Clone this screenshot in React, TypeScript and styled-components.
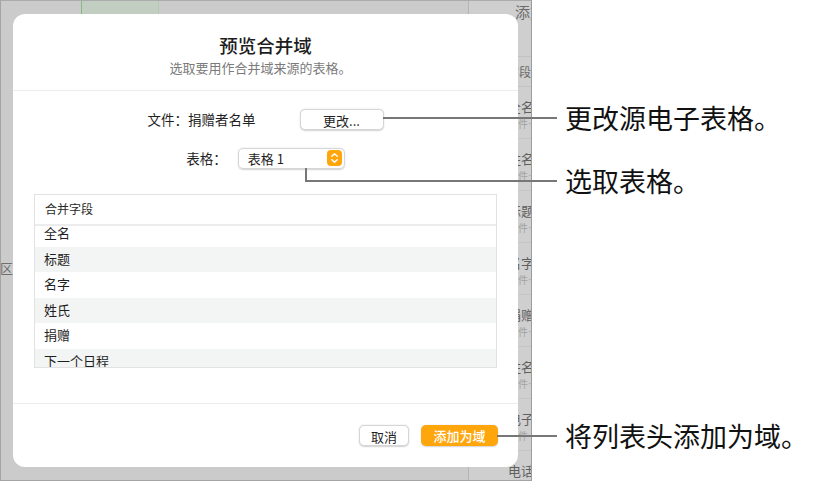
import React from 'react'
import styled, {createGlobalStyle} from "styled-components";

const GlobalStyle = createGlobalStyle`
    body {
        margin: 0;
        background: #fff;
        font-family: "Noto Sans CJK SC", "Noto Sans", sans-serif;
    }
`

const Page = styled.div`
    position: relative;
    width: 819px;
    height: 481px;
    display: flex;
    overflow: hidden;
    background: #fff;
`

const Screen = styled.div`
    position: relative;
    box-sizing: border-box;
    width: 532px;
    height: 481px;
    display: flex;
    background: #cbcbcb;
    border-left: 1px solid #a4a4a4;
    border-top: 1px solid #ababab;
    border-bottom: 1px solid #a4a4a4;
    border-right: 1px solid #9c9c9c;
`

const MainArea = styled.div`
    width: 467px;
    display: flex;
    flex-direction: column;
`

const TopBar = styled.div`
    height: 13px;
    display: flex;
`

const GreenCell = styled.div`
    margin-left: 80px;
    width: 76px;
    background: #c3cec3;
    border-left: 1px solid #86b886;
    border-right: 1px solid #b5c7b5;
`

const EdgeGlyph = styled.div`
    margin-top: 246px;
    margin-left: -1px;
    font-size: 13px;
    line-height: 16px;
    color: #707070;
`

const Sidebar = styled.div`
    width: 62px;
    border-left: 1px solid #b4b4b4;
    background: #cfcfcf;
    overflow: hidden;
    white-space: nowrap;
`

const SideHeader = styled.div`
    height: 56px;
    padding: 1px 0 0 46px;
    box-sizing: border-box;
    font-size: 15px;
    line-height: 19px;
    color: #6b6b6b;
    border-bottom: 1px solid #c2c2c2;
`

const SideSection = styled.div`
    height: 29px;
    padding-left: 38px;
    font-size: 12px;
    line-height: 29px;
    color: #6b6b6b;
    border-bottom: 1px solid #c2c2c2;
`

const SideRow = styled.div`
    height: 52px;
    padding: 12px 0 0 39px;
    box-sizing: border-box;
    border-bottom: 1px solid #c6c6c6;
`

const SideTitle = styled.div`
    font-size: 13px;
    line-height: 16px;
    color: #5f5f5f;
`

const SideSub = styled.div`
    margin-top: 2px;
    font-size: 10px;
    line-height: 14px;
    color: #a2a2a2;
`

const Dialog = styled.div`
    position: absolute;
    left: 12px;
    top: 13px;
    width: 505px;
    height: 453px;
    background: #fff;
    border-radius: 12px;
    display: flex;
    flex-direction: column;
`

const Header = styled.div`
    padding: 19px 0 13px;
    text-align: center;
    border-bottom: 1px solid #ececec;
`

const Title = styled.div`
    font-size: 18.5px;
    line-height: 24px;
    font-weight: 500;
    color: #1d1d1d;
`

const Subtitle = styled.div`
    margin-top: 2px;
    padding-right: 10px;
    font-size: 13px;
    line-height: 18px;
    color: #7b7b7b;
`

const Form = styled.div`
    flex: 1;
    display: flex;
    flex-direction: column;
    padding-top: 17px;
`

const FieldRow = styled.div<{ $gap: number, $top?: number }>`
    display: flex;
    justify-content: center;
    align-items: center;
    gap: ${p => p.$gap}px;
    height: 22px;
    margin-top: ${p => p.$top || 0}px;
`

const Label = styled.span`
    font-size: 13.5px;
    color: #1f1f1f;
`

const Button = styled.button<{ $primary?: boolean, $width: number }>`
    width: ${p => p.$width}px;
    height: 21px;
    padding: 0;
    border-radius: 5px;
    font-family: inherit;
    font-size: 13px;
    line-height: 21px;
    border: ${p => p.$primary ? 'none' : '0.5px solid #d6d6d6'};
    background: ${p => p.$primary ? '#ffa60d' : '#fff'};
    color: ${p => p.$primary ? '#fff' : '#1f1f1f'};
    font-weight: ${p => p.$primary ? 500 : 400};
    box-shadow: 0 0.5px 1.5px rgba(0, 0, 0, 0.18);
`

const Select = styled.div`
    box-sizing: border-box;
    width: 107px;
    height: 21px;
    padding: 0 2px 0 9px;
    display: flex;
    align-items: center;
    justify-content: space-between;
    border: 0.5px solid #d6d6d6;
    border-radius: 5px;
    box-shadow: 0 0.5px 1.5px rgba(0, 0, 0, 0.18);
    font-size: 13px;
    color: #1f1f1f;
`

const Table = styled.div`
    margin: 25px 21px 0;
    height: 174px;
    box-sizing: border-box;
    border: 1px solid #e2e2e2;
    display: flex;
    flex-direction: column;
`

const TableHead = styled.div`
    height: 29px;
    padding-left: 10px;
    font-size: 12px;
    line-height: 28px;
    color: #2a2a2a;
    border-bottom: 2px solid #ececec;
`

const TableBody = styled.div`
    flex: 1;
    overflow: hidden;
`

const RowList = styled.div`
    margin-top: -5px;
`

const Row = styled.div`
    height: 25.5px;
    padding-left: 9px;
    font-size: 13px;
    line-height: 23.5px;
    color: #1f1f1f;

    &:nth-child(even) {
        background: #f3f4f4;
    }
`

const Footer = styled.div`
    height: 63px;
    padding: 0 20px;
    display: flex;
    align-items: center;
    justify-content: flex-end;
    gap: 12px;
    border-top: 1px solid #ececec;
`

const Callout = styled.div<{ $left: number, $y: number, $stub?: number }>`
    position: absolute;
    left: ${p => p.$left}px;
    top: ${p => p.$y - 16}px;
    height: 32px;
    display: flex;
    align-items: center;

    &::before {
        content: '';
        display: ${p => p.$stub ? 'block' : 'none'};
        position: absolute;
        left: 0;
        top: ${p => 17 - (p.$stub || 0)}px;
        width: 2px;
        height: ${p => p.$stub || 0}px;
        background: #777;
    }
`

const Leader = styled.div<{ $width: number }>`
    width: ${p => p.$width}px;
    height: 2px;
    background: #777;
`

const Note = styled.span`
    margin-left: 8px;
    font-size: 27px;
    line-height: 32px;
    color: #111;
    white-space: nowrap;
`

const Stepper = () => (
    <svg width="15" height="16" viewBox="0 0 15 16">
        <rect width="15" height="16" rx="4" fill="#ffa60d"/>
        <path d="M4.8 6.3 L7.5 3.8 L10.2 6.3" stroke="#fff" strokeWidth="1.5" fill="none"
              strokeLinecap="round" strokeLinejoin="round"/>
        <path d="M4.8 9.7 L7.5 12.2 L10.2 9.7" stroke="#fff" strokeWidth="1.5" fill="none"
              strokeLinecap="round" strokeLinejoin="round"/>
    </svg>
)

const sideItems = ['全名', '姓名', '标题', '名字', '捐赠', '姓名', '电子', '电话']
const fields = ['全名', '标题', '名字', '姓氏', '捐赠', '下一个日程']

const LINE_END = 557

const callouts = [
    {left: 383, y: 118, text: '更改源电子表格。'},
    {left: 305, y: 181, text: '选取表格。', stub: 14},
    {left: 497, y: 436, text: '将列表头添加为域。'},
]

const App: React.FC = () => {
    return (
        <Page>
            <GlobalStyle/>
            <Screen>
                <MainArea>
                    <TopBar>
                        <GreenCell/>
                    </TopBar>
                    <EdgeGlyph>区</EdgeGlyph>
                </MainArea>
                <Sidebar>
                    <SideHeader>添加</SideHeader>
                    <SideSection>字段</SideSection>
                    {sideItems.map((item, index) => (
                        <SideRow key={index}>
                            <SideTitle>{item}</SideTitle>
                            <SideSub>文件…</SideSub>
                        </SideRow>
                    ))}
                </Sidebar>

                <Dialog>
                    <Header>
                        <Title>预览合并域</Title>
                        <Subtitle>选取要用作合并域来源的表格。</Subtitle>
                    </Header>
                    <Form>
                        <FieldRow $gap={44}>
                            <Label>文件：捐赠者名单</Label>
                            <Button $width={84}>更改...</Button>
                        </FieldRow>
                        <FieldRow $gap={11} $top={17}>
                            <Label>表格：</Label>
                            <Select>
                                <span>表格 1</span>
                                <Stepper/>
                            </Select>
                        </FieldRow>
                        <Table>
                            <TableHead>合并字段</TableHead>
                            <TableBody>
                                <RowList>
                                    {fields.map((field, index) => (
                                        <Row key={index}>{field}</Row>
                                    ))}
                                </RowList>
                            </TableBody>
                        </Table>
                    </Form>
                    <Footer>
                        <Button $width={50}>取消</Button>
                        <Button $width={77} $primary>添加为域</Button>
                    </Footer>
                </Dialog>
            </Screen>

            {callouts.map((c, index) => (
                <Callout key={index} $left={c.left} $y={c.y} $stub={c.stub}>
                    <Leader $width={LINE_END - c.left}/>
                    <Note>{c.text}</Note>
                </Callout>
            ))}
        </Page>
    )
}

export default App;
